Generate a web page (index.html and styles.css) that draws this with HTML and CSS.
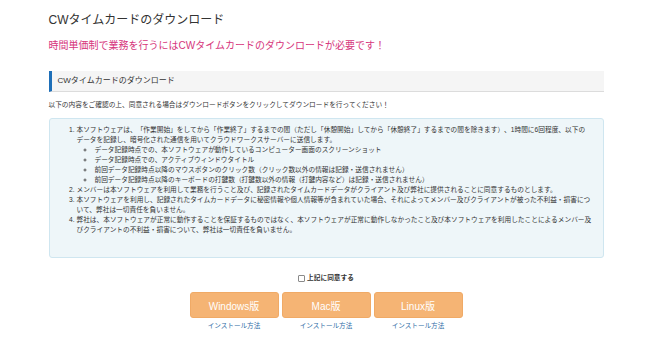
FILE: index.html
```html
<!DOCTYPE html>
<html lang="ja">
<head>
    <meta charset="UTF-8">
    <meta name="viewport" content="width=device-width, initial-scale=1.0">
    <title>CWタイムカードのダウンロード</title>
    <link rel="stylesheet" href="styles.css">
</head>
<body>
    <div class="page">
        <h1 class="page-title">CWタイムカードのダウンロード</h1>
        <p class="lead">時間単価制で業務を行うにはCWタイムカードのダウンロードが必要です！</p>

        <h2 class="section-title">CWタイムカードのダウンロード</h2>
        <p class="intro">以下の内容をご確認の上、同意される場合はダウンロードボタンをクリックしてダウンロードを行ってください！</p>

        <div class="terms">
            <ol class="terms-list">
                <li>本ソフトウェアは、「作業開始」をしてから「作業終了」するまでの間（ただし「休憩開始」してから「休憩終了」するまでの間を除きます）、1時間に6回程度、以下のデータを記録し、暗号化された通信を用いてクラウドワークスサーバーに送信します。
                    <ul>
                        <li>データ記録時点での、本ソフトウェアが動作しているコンピューター画面のスクリーンショット</li>
                        <li>データ記録時点での、アクティブウィンドウタイトル</li>
                        <li>前回データ記録時点以降のマウスボタンのクリック数（クリック数以外の情報は記録・送信されません）</li>
                        <li>前回データ記録時点以降のキーボードの打鍵数（打鍵数以外の情報（打鍵内容など）は記録・送信されません）</li>
                    </ul>
                </li>
                <li>メンバーは本ソフトウェアを利用して業務を行うこと及び、記録されたタイムカードデータがクライアント及び弊社に提供されることに同意するものとします。</li>
                <li>本ソフトウェアを利用し、記録されたタイムカードデータに秘密情報や個人情報等が含まれていた場合、それによってメンバー及びクライアントが被った不利益・損害について、弊社は一切責任を負いません。</li>
                <li>弊社は、本ソフトウェアが正常に動作することを保証するものではなく、本ソフトウェアが正常に動作しなかったこと及び本ソフトウェアを利用したことによるメンバー及びクライアントの不利益・損害について、弊社は一切責任を負いません。</li>
            </ol>
        </div>

        <label class="agree">
            <input type="checkbox" id="agree">
            <span>上記に同意する</span>
        </label>

        <div class="downloads">
            <div class="download">
                <button class="download-btn">Windows版</button>
                <a href="#" class="install-link">インストール方法</a>
            </div>
            <div class="download">
                <button class="download-btn">Mac版</button>
                <a href="#" class="install-link">インストール方法</a>
            </div>
            <div class="download">
                <button class="download-btn">Linux版</button>
                <a href="#" class="install-link">インストール方法</a>
            </div>
        </div>
    </div>
</body>
</html>
```

FILE: styles.css
```css
/* Base Reset */
* {
    margin: 0;
    padding: 0;
    box-sizing: border-box;
}

body {
    font-family: 'Liberation Sans', 'Noto Sans CJK JP', sans-serif;
    background: #fff;
    color: #333;
    line-break: strict;
    text-spacing-trim: space-all;
}

.page {
    width: 555px;
    margin: 0 auto;
    padding-top: 12px;
}

/* Headings */
.page-title {
    font-size: 12px;
    line-height: 16px;
    font-weight: 400;
    color: #333;
}

.lead {
    margin-top: 11px;
    font-size: 10px;
    line-height: 14px;
    color: #d6357c;
}

.section-title {
    margin-top: 18px;
    padding-left: 6px;
    font-size: 8px;
    line-height: 20px;
    font-weight: 400;
    background: #f5f5f5;
    border-left: 3px solid #1e6fb8;
    border-bottom: 1px solid #dcdcdc;
}

.intro {
    margin-top: 7px;
    font-size: 6.7px;
    line-height: 12px;
}

/* Terms Box */
.terms {
    margin-top: 7px;
    padding: 6px 0 22px;
    background: #eef6f9;
    border: 1px solid #cfe6f0;
    border-radius: 3px;
}

.terms-list {
    width: 546px;
    padding-left: 27px;
    font-size: 6.7px;
    line-height: 10px;
}

.terms-list ul {
    padding-left: 18px;
    list-style: circle;
}

.terms-list ul li::marker {
    font-size: 8px;
    color: #555;
}

/* Agreement */
.agree {
    margin-top: 15px;
    display: flex;
    justify-content: center;
    align-items: center;
    gap: 2px;
    font-size: 6.7px;
    line-height: 10px;
    font-weight: 700;
}

.agree input {
    appearance: none;
    width: 7px;
    height: 7px;
    margin: 0;
    background: #fff;
    border: 1px solid #8a8a8a;
    border-radius: 1px;
}

.agree input:checked {
    background: #1e6fb8;
    border-color: #1e6fb8;
}

/* Download Buttons */
.downloads {
    margin-top: 9px;
    display: flex;
    justify-content: center;
    gap: 3px;
}

.download {
    display: flex;
    flex-direction: column;
    align-items: center;
    gap: 3px;
}

.download-btn {
    width: 89px;
    height: 26px;
    font-family: inherit;
    font-size: 10px;
    color: #fff;
    background: #f5b474;
    border: 1px solid #f0aa66;
    border-radius: 3px;
    cursor: pointer;
}

.install-link {
    font-size: 6.6px;
    line-height: 10px;
    color: #2f6ca6;
    text-decoration: none;
}
```
